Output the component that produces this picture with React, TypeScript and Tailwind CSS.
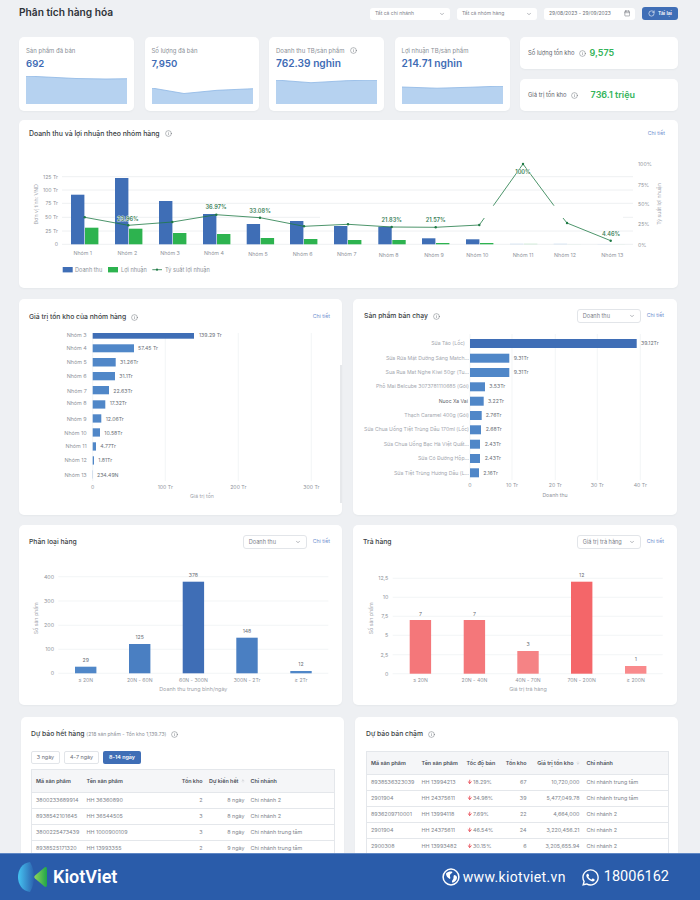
import { ArrowDown, ArrowUp, Calendar, ChevronDown, Info, RotateCw } from "lucide-react"
import { FaWhatsapp } from "react-icons/fa"
import type { ReactNode } from "react"

const gridColor = "#eef0f2"
const axisText = "#8f949c"
const valueText = "#6a6f77"

function T({ x, y, s = 5.2, fill = axisText, anchor = "start", weight = 400, rotate, halo, children }: {
  x: number
  y: number
  s?: number
  fill?: string
  anchor?: "start" | "middle" | "end"
  weight?: number
  rotate?: number
  halo?: boolean
  children: ReactNode
}) {
  return (
    <text
      x={x}
      y={y}
      fontSize={s}
      fill={fill}
      fontWeight={weight}
      textAnchor={anchor}
      dominantBaseline="central"
      stroke={halo ? "rgba(255,255,255,0.75)" : undefined}
      strokeWidth={halo ? 1.2 : undefined}
      paintOrder={halo ? "stroke" : undefined}
      transform={rotate ? `rotate(${rotate} ${x} ${y})` : undefined}
    >
      {children}
    </text>
  )
}

function Card({ className, children }: { className: string; children: ReactNode }) {
  return <div className={`bg-white rounded-[5px] shadow-[0_1px_2px_rgba(30,40,60,0.04)] ${className}`}>{children}</div>
}

function Icon() {
  return <Info size={7} strokeWidth={1.4} className="text-[#555b64] shrink-0" />
}

function Select({ label, className }: { label: string; className: string }) {
  return (
    <div className={`flex items-center justify-between bg-white rounded-[3px] text-[#7d828a] ${className}`}>
      <span>{label}</span>
      <ChevronDown size={6} className="text-[#6b7078]" />
    </div>
  )
}

function Detail() {
  return <span className="text-[5.2px] text-[#6f8fcf]">Chi tiết</span>
}

function Kpi({ label, value, info, big, pts, bottom }: {
  label: string
  value: string
  info?: boolean
  big?: boolean
  pts: string
  bottom: number
}) {
  return (
    <Card className="h-[74px] px-[7px] pt-[9px] relative">
      <div className="flex items-center gap-[6px] h-[8px] text-[6px] text-[#8a8f97]">
        <span>{label}</span>
        {info && <Icon />}
      </div>
      <div className={`font-semibold text-[#3f6cb5] mt-[3px] leading-[13px] ${big ? "text-[10.2px]" : "text-[9.6px]"}`}>{value}</div>
      <svg width="101" height={bottom} viewBox={`0 0 101 ${bottom}`} className="block absolute left-[7px] bottom-[7px]">
        <polygon points={`0,${bottom} ${pts} 101,${bottom}`} fill="#b6d2f0" />
        <polyline points={pts} fill="none" stroke="#8db6e5" strokeWidth="0.8" />
      </svg>
    </Card>
  )
}

const groups = [
  { x: 71, top: 194.7, gTop: 227.7, lx: 82.7, ly: 253.3 },
  { x: 115, top: 178, gTop: 228.7, lx: 127.3, ly: 252.7 },
  { x: 159, top: 201, gTop: 233, lx: 170, ly: 252.7 },
  { x: 203, top: 214, gTop: 234, lx: 214, ly: 253.3 },
  { x: 246.7, top: 224, gTop: 238, lx: 258, ly: 253.7 },
  { x: 290, top: 221, gTop: 239, lx: 302.7, ly: 253.7 },
  { x: 334, top: 226, gTop: 240, lx: 346.7, ly: 254.3 },
  { x: 378.3, top: 226.7, gTop: 240, lx: 388.7, ly: 254.7 },
  { x: 422, top: 238.3, gTop: 243, lx: 434, ly: 255.3 },
  { x: 466, top: 239.3, gTop: 243, lx: 477.3, ly: 254.7 },
  { x: 510, top: 243.7, gTop: 243.7, lx: 523, ly: 254.7, light: true },
  { x: 553.7, top: 243.7, gTop: 244.2, lx: 565, ly: 254.7, light: true },
  { x: 597.5, top: 244.1, gTop: 244.2, lx: 612.3, ly: 254.7, light: true },
]

const points = [
  [84.7, 217.3], [128.3, 225.3], [172.3, 222], [216.3, 214.7], [260, 217.7], [304, 226.3], [348, 224.3],
  [391.7, 227], [435.7, 227.3], [479.3, 225], [523, 164], [567, 223], [610.7, 240.7],
]

const rates = [
  { x: 128, y: 218.5, t: "23.96%" },
  { x: 216, y: 207, t: "36.97%" },
  { x: 260, y: 210.7, t: "33.08%" },
  { x: 391.7, y: 220, t: "21.83%" },
  { x: 435.7, y: 220, t: "21.57%" },
  { x: 523, y: 171.7, t: "100%" },
  { x: 611, y: 233.7, t: "4.46%" },
]

function RevenueChart() {
  const axisL = [["125 Tr", 176.7], ["100 Tr", 190], ["75 Tr", 203.3], ["50 Tr", 217.3], ["25 Tr", 231], ["0", 244.3]] as const
  const axisR = [["100%", 164], ["75%", 184.7], ["50%", 204], ["25%", 224.3], ["0%", 244.7]] as const
  const line = (from: number, to: number) => points.slice(from, to).map((p) => p.join(",")).join(" ")
  return (
    <svg width="658" height="140" viewBox="19 148 658 140" className="block">
      {[176.7, 190, 203.3, 231, 244.3].map((y) => (
        <line key={y} x1="62" x2="633" y1={y} y2={y} stroke={gridColor} strokeWidth="1" />
      ))}
      <line x1="62" x2="320" y1="217.3" y2="217.3" stroke={gridColor} strokeWidth="1" />
      <line x1="623" x2="633" y1="217.3" y2="217.3" stroke={gridColor} strokeWidth="1" />
      {axisL.map(([t, y]) => <T key={t} x={58} y={y} anchor="end">{t}</T>)}
      {axisR.map(([t, y]) => <T key={t} x={638} y={y}>{t}</T>)}
      <T x={36} y={204.3} anchor="middle" rotate={-90} fill="#a4a8af">Đơn vị tính: VND</T>
      <T x={658.7} y={204} anchor="middle" rotate={-90} fill="#a4a8af">Tỷ suất lợi nhuận</T>
      {groups.map((g) => (
        <g key={g.x}>
          <rect x={g.x} y={g.top} width="13.4" height={244.3 - g.top} fill={g.light ? "#c9dcf2" : "#3f6eb6"} />
          <rect x={g.x + 14} y={g.gTop} width="13.4" height={244.3 - g.gTop} fill={g.light ? "#bfe8cb" : "#2db34f"} />
        </g>
      ))}
      {groups.map((g, i) => <T key={i} x={g.lx} y={g.ly} s={5.3} anchor="middle">{`Nhóm ${i + 1}`}</T>)}
      <polyline points={line(0, 10)} fill="none" stroke="#1f7a45" strokeWidth="0.8" />
      <polyline points="479.3,225 484.3,218" fill="none" stroke="#1f7a45" strokeWidth="0.8" />
      <polyline points="493.3,205.7 523,164 554,205.7" fill="none" stroke="#1f7a45" strokeWidth="0.8" />
      <polyline points="563,218 567,223 610.7,240.7" fill="none" stroke="#1f7a45" strokeWidth="0.8" />
      {points.map((p) => <circle key={p[0]} cx={p[0]} cy={p[1]} r="1.2" fill="#1f7a45" />)}
      {rates.map((r) => <T key={r.t} x={r.x} y={r.y} s={5.6} weight={600} anchor="middle" fill="#3a8058" halo>{r.t}</T>)}
      <rect x="62.7" y="267" width="10" height="5.4" fill="#3f6eb6" />
      <T x={75} y={269.8} s={5.6}>Doanh thu</T>
      <rect x="108" y="267" width="10" height="5.4" fill="#2db34f" />
      <T x={121} y={269.8} s={5.6}>Lợi nhuận</T>
      <line x1="152.3" x2="162" y1="269.7" y2="269.7" stroke="#1f7a45" strokeWidth="0.8" />
      <circle cx="157" cy="269.7" r="1.1" fill="#1f7a45" />
      <T x={165} y={269.8} s={5.6}>Tỷ suất lợi nhuận</T>
    </svg>
  )
}

const stock = [
  { n: 3, y: 335, top: 327, h: 11.7, end: 194, v: "139.29 Tr", vx: 199 },
  { n: 4, y: 348, top: 344.3, h: 8, end: 134, v: "57.45 Tr", vx: 138 },
  { n: 5, y: 362, top: 358, h: 8.5, end: 115.7, v: "31.26Tr", vx: 120 },
  { n: 6, y: 376, top: 372, h: 8.3, end: 115, v: "31.1Tr", vx: 119.3 },
  { n: 7, y: 390.7, top: 386, h: 8.3, end: 109, v: "22.63Tr", vx: 113.3 },
  { n: 8, y: 403.3, top: 400.3, h: 8.3, end: 105.3, v: "17.32Tr", vx: 109.7 },
  { n: 9, y: 418.7, top: 414.3, h: 8.3, end: 101.3, v: "12.06Tr", vx: 105.7 },
  { n: 10, y: 432.7, top: 428.3, h: 8.3, end: 100, v: "10.58Tr", vx: 104.3 },
  { n: 11, y: 446, top: 442.3, h: 8.3, end: 96, v: "4.77Tr", vx: 100.3 },
  { n: 12, y: 459.7, top: 456.3, h: 8.3, end: 94, v: "1.81Tr", vx: 98.3 },
  { n: 13, y: 475, top: 470.3, h: 8.3, end: 92.9, v: "234.49N", vx: 97 },
]

function StockChart() {
  return (
    <svg width="323" height="182" viewBox="19 333 323 182" className="block">
      {[92.7, 165.3, 238.3, 311.3].map((x) => (
        <line key={x} x1={x} x2={x} y1="333" y2="481" stroke={gridColor} strokeWidth="0.7" />
      ))}
      {stock.map((r) => (
        <g key={r.n}>
          <T x={86.7} y={r.y} s={5.4} anchor="end">{`Nhóm ${r.n}`}</T>
          <rect x="92.7" y={r.top} width={r.end - 92.7} height={r.h} fill={r.n === 3 ? "#3f6eb6" : "#5087c8"} />
          <T x={r.vx} y={r.y} s={5.2} fill={valueText}>{r.v}</T>
        </g>
      ))}
      {[["0", 92.7], ["100 Tr", 165.3], ["200 Tr", 238.3], ["300 Tr", 311.3]].map(([t, x]) => (
        <T key={t} x={x as number} y={487.3} anchor="middle">{t}</T>
      ))}
      <T x={202} y={496.3} anchor="middle" fill="#a0a4ab">Giá trị tồn</T>
      <rect x="340" y="365" width="2" height="138" fill="#e6e8eb" />
    </svg>
  )
}

const best = [
  { l: "Sữa Táo (Lốc)", lx: 465, top: 339, end: 636.7, v: "39.12Tr", vx: 641, y: 343.3 },
  { l: "Sữa Rửa Mặt Dưỡng Sáng Match...", lx: 469, top: 353.7, end: 509.3, v: "9.31Tr", vx: 513.7, y: 358 },
  { l: "Sua Rua Mat  Nghe Kiwi 50gr (Tu...", lx: 469, top: 368, end: 509.3, v: "9.31Tr", vx: 513.7, y: 372 },
  { l: "Phô Mai Belcube 3073781110685 (Gói)", lx: 469, top: 382.3, end: 485, v: "3.53Tr", vx: 489.3, y: 386.3 },
  { l: "Nuoc Xa Vai", lx: 468, top: 396.7, end: 483.7, v: "3.22Tr", vx: 488, y: 401, dark: true },
  { l: "Thạch Caramel 400g (Gói)", lx: 469, top: 411, end: 481.7, v: "2.76Tr", vx: 485.7, y: 415 },
  { l: "Sữa Chua Uống Tiệt Trùng Dâu 170ml (Lốc)", lx: 469, top: 425.3, end: 481, v: "2.68Tr", vx: 485.7, y: 429.3 },
  { l: "Sữa Chua Uống Bạc Hà Việt Quất...", lx: 469, top: 439.7, end: 480, v: "2.43Tr", vx: 484.7, y: 444 },
  { l: "Sữa  Có Đường Hộp...", lx: 469, top: 454, end: 480, v: "2.43Tr", vx: 484.7, y: 458 },
  { l: "Sữa Tiệt Trùng Hương Dâu (L...", lx: 469, top: 468.3, end: 479, v: "2.16Tr", vx: 483.3, y: 473 },
]

function BestChart() {
  return (
    <svg width="324" height="182" viewBox="353 333 324 182" className="block">
      {[470, 512, 555.3, 597.3, 640.3].map((x) => (
        <line key={x} x1={x} x2={x} y1="334" y2="480" stroke={gridColor} strokeWidth="0.7" />
      ))}
      {best.map((r, i) => (
        <g key={r.y}>
          <T x={r.lx} y={r.y} s={5.15} anchor="end" fill={r.dark ? "#5f646c" : "#a4a8af"}>{r.l}</T>
          <rect x="470" y={r.top} width={r.end - 470} height="9" fill={i === 0 ? "#3f6eb6" : "#5087c8"} />
          <T x={r.vx} y={r.y} s={5.2} fill={valueText}>{r.v}</T>
        </g>
      ))}
      {[["0", 470], ["10 Tr", 512], ["20 Tr", 555.3], ["30 Tr", 597.3], ["40 Tr", 640.3]].map(([t, x]) => (
        <T key={t} x={x as number} y={485.3} anchor="middle">{t}</T>
      ))}
      <T x={555} y={495} anchor="middle">Doanh thu</T>
    </svg>
  )
}

type Column = { x: number; top: number; v: string; vy: number; l: string; c: string }

function ColumnChart({ vb, ticks, x1, x2, tx, titleX, cols, xTitle, xTitleX, yBase }: {
  vb: string
  ticks: [string, number][]
  x1: number
  x2: number
  tx: number
  titleX: number
  cols: Column[]
  xTitle: string
  xTitleX: number
  yBase: number
}) {
  return (
    <svg width="324" height="146" viewBox={vb} className="block">
      {ticks.map(([t, y]) => (
        <g key={t}>
          <line x1={x1} x2={x2} y1={y} y2={y} stroke={gridColor} strokeWidth="0.7" />
          <T x={tx} y={y} s={5.3} anchor="end">{t}</T>
        </g>
      ))}
      <T x={titleX} y={618.3} anchor="middle" rotate={-90} fill="#a4a8af">Số sản phẩm</T>
      {cols.map((c) => (
        <g key={c.x}>
          <rect x={c.x} y={c.top} width="21.4" height={yBase - c.top} fill={c.c} />
          <T x={c.x + 10.7} y={c.vy} s={5.2} anchor="middle" fill={valueText}>{c.v}</T>
          <T x={c.x + 10.7} y={680} s={5.1} anchor="middle">{c.l}</T>
        </g>
      ))}
      <T x={xTitleX} y={688.7} s={5.4} anchor="middle" fill="#a0a4ab">{xTitle}</T>
    </svg>
  )
}

const classCols: Column[] = [
  { x: 75, top: 666.7, v: "29", vy: 660, l: "≤ 20N", c: "#5087c8" },
  { x: 129, top: 644, v: "125", vy: 637, l: "20N - 60N", c: "#4a7fc2" },
  { x: 182.7, top: 581.7, v: "378", vy: 575.3, l: "60N - 300N", c: "#3f6eb6" },
  { x: 236.3, top: 637.7, v: "148", vy: 631, l: "300N - 2Tr", c: "#4a7fc2" },
  { x: 290.3, top: 671, v: "12", vy: 664, l: "≥ 2Tr", c: "#5087c8" },
]

const returnCols: Column[] = [
  { x: 409.7, top: 620, v: "7", vy: 613.7, l: "≤ 20N", c: "#f4777a" },
  { x: 463.7, top: 620, v: "7", vy: 613.7, l: "20N - 40N", c: "#f4777a" },
  { x: 517.3, top: 651, v: "3", vy: 644, l: "40N - 70N", c: "#f58385" },
  { x: 571, top: 581.7, v: "12", vy: 575.3, l: "70N - 200N", c: "#f46669" },
  { x: 625, top: 666, v: "1", vy: 659.3, l: "≥ 200N", c: "#f98a8c" },
]

const outRows = [
  ["3800233689914", "HH 36360890", "2", "8 ngày", "Chi nhánh 2"],
  ["8938542101645", "HH 36544505", "3", "8 ngày", "Chi nhánh 2"],
  ["3800225473439", "HH 1000900109", "3", "8 ngày", "Chi nhánh trung tâm"],
  ["8938525171320", "HH 13993355", "2", "9 ngày", "Chi nhánh trung tâm"],
  ["8938525171337", "HH 13993356", "2", "9 ngày", "Chi nhánh trung tâm"],
]

const slowRows = [
  ["8938536323039", "HH 13994213", "18.29%", "67", "10,720,000", "Chi nhánh trung tâm"],
  ["2901904", "HH 24375611", "34.98%", "39", "5,477,049.78", "Chi nhánh trung tâm"],
  ["8936209710001", "HH 13994118", "7.69%", "22", "4,664,000", "Chi nhánh 2"],
  ["2901904", "HH 24375611", "46.54%", "24", "3,220,456.21", "Chi nhánh 2"],
  ["2900308", "HH 13993482", "30.15%", "6", "3,205,655.94", "Chi nhánh 2"],
]

function OutTable() {
  return (
    <table className="table-fixed w-[304px] border-collapse text-[5.4px] text-[#80858d] border border-[#e4e7eb]">
      <colgroup>
        <col className="w-[55px]" />
        <col className="w-[64px]" />
        <col className="w-[52px]" />
        <col className="w-[42px]" />
        <col />
      </colgroup>
      <thead>
        <tr className="h-[23px] bg-[#f5f6f8] text-[#4b5058]">
          <th className="pl-[4px] text-left font-semibold">Mã sản phẩm</th>
          <th className="text-left font-semibold">Tên sản phẩm</th>
          <th className="text-right font-semibold">Tồn kho</th>
          <th className="text-right font-semibold">
            <span className="inline-flex items-center gap-[2px]">Dự kiến hết <ArrowUp size={4} className="text-[#b5b9bf]" /></span>
          </th>
          <th className="pl-[6px] text-left font-semibold">Chi nhánh</th>
        </tr>
      </thead>
      <tbody>
        {outRows.map((r) => (
          <tr key={r[0]} className="h-[16px] border-t border-[#e4e7eb]">
            <td className="pl-[4px]">{r[0]}</td>
            <td>{r[1]}</td>
            <td className="text-right">{r[2]}</td>
            <td className="text-right">{r[3]}</td>
            <td className="pl-[6px]">{r[4]}</td>
          </tr>
        ))}
      </tbody>
    </table>
  )
}

function SlowTable() {
  return (
    <table className="table-fixed w-[303px] border-collapse text-[5.4px] text-[#80858d] border border-[#e4e7eb]">
      <colgroup>
        <col className="w-[55px]" />
        <col className="w-[45px]" />
        <col className="w-[33px]" />
        <col className="w-[27px]" />
        <col className="w-[53px]" />
        <col />
      </colgroup>
      <thead>
        <tr className="h-[23px] bg-[#f5f6f8] text-[#4b5058]">
          <th className="pl-[4px] text-left font-semibold">Mã sản phẩm</th>
          <th className="text-left font-semibold">Tên sản phẩm</th>
          <th className="text-left font-semibold">Tốc độ bán</th>
          <th className="text-right font-semibold">Tồn kho</th>
          <th className="text-right font-semibold">
            <span className="inline-flex items-center gap-[2px]">Giá trị tồn kho <ArrowDown size={4} className="text-[#b5b9bf]" /></span>
          </th>
          <th className="pl-[7px] text-left font-semibold">Chi nhánh</th>
        </tr>
      </thead>
      <tbody>
        {slowRows.map((r) => (
          <tr key={r[2]} className="h-[16px] border-t border-[#e4e7eb]">
            <td className="pl-[4px]">{r[0]}</td>
            <td>{r[1]}</td>
            <td>
              <span className="inline-flex items-center gap-[1px]">
                <ArrowDown size={5.5} strokeWidth={3.5} className="text-[#e5333f]" />
                {r[2]}
              </span>
            </td>
            <td className="text-right">{r[3]}</td>
            <td className="text-right">{r[4]}</td>
            <td className="pl-[7px]">{r[5]}</td>
          </tr>
        ))}
      </tbody>
    </table>
  )
}

function Logo() {
  return (
    <svg width="30" height="30" viewBox="0 0 30 30">
      <defs>
        <linearGradient id="lens" x1="0" x2="1" y1="0" y2="0">
          <stop offset="0" stopColor="#45c4f2" />
          <stop offset="1" stopColor="#2c62ae" />
        </linearGradient>
        <linearGradient id="leaf" x1="0" x2="1" y1="0" y2="0">
          <stop offset="0" stopColor="#8fd65a" />
          <stop offset="1" stopColor="#1fa54a" />
        </linearGradient>
      </defs>
      <path d="M12 0 C4 1 0 8 0 15 C0 22 4 29 12 30 C15 25 16 20 16 15 C16 10 15 5 12 0 Z" fill="url(#lens)" />
      <path d="M17 13.5 L26.5 5.5 C28 4.5 29 5.2 29 7 L29 23 C29 24.8 28 25.5 26.5 24.5 L17 16.5 C16 15.5 16 14.5 17 13.5 Z" fill="url(#leaf)" />
    </svg>
  )
}

function Globe() {
  return (
    <svg width="18" height="18" viewBox="0 0 18 18" className="shrink-0">
      <circle cx="9" cy="9" r="7.9" fill="none" stroke="#fff" strokeWidth="1.5" />
      <path d="M4 5.5 C6 3.5 9 3 10.5 4 C10 5.5 8.5 5.5 8 7 C7.5 8.5 9 9.5 8 11 C6.5 10.5 4 8.5 4 5.5 Z" fill="#fff" />
      <path d="M12 7 C13.5 7 15 8 15 9.5 C15 12 13 14 10.5 14.8 C9.5 14 10 12.5 11 11.5 C12 10.5 11 8.5 12 7 Z" fill="#fff" />
    </svg>
  )
}

export default function App() {
  return (
    <div className="relative w-[700px] h-[900px] overflow-hidden bg-[#eef0f3] font-[Inter,sans-serif]">
      <div className="pl-[19px] w-[678px]">
        <header className="h-[37px] flex items-start justify-between">
          <h1 className="text-[10.2px] font-semibold text-[#2f3338] mt-[6px] leading-[13px]">Phân tích hàng hóa</h1>
          <div className="flex items-center gap-[7px] mt-[7px]">
            <Select label="Tất cả chi nhánh" className="w-[80px] h-[12px] px-[5px] text-[5px]" />
            <Select label="Tất cả nhóm hàng" className="w-[80px] h-[12px] px-[5px] text-[5px]" />
            <div className="flex items-center justify-between w-[91px] h-[12px] px-[5px] bg-white rounded-[3px] text-[5px] text-[#6d7279]">
              <span>29/08/2023 - 29/09/2023</span>
              <Calendar size={6.5} />
            </div>
            <button type="button" className="flex items-center justify-center gap-[3px] w-[36px] h-[13px] rounded-[3px] bg-[#3f6eb6] text-white text-[5px] font-semibold">
              <RotateCw size={7} />
              Tải lại
            </button>
          </div>
        </header>

        <section className="grid grid-cols-[115px_114px_115px_115px_158px] gap-x-[10.5px] h-[74px]">
          <Kpi label="Sản phẩm đã bán" value="692" pts="0,0 50,2.5 80,3 101,2.7" bottom={28} />
          <Kpi label="Số lượng đã bán" value="7,950" pts="0,0 32,5.5 65,2.3 101,0.7" bottom={16} />
          <Kpi label="Doanh thu TB/sản phẩm" value="762.39 nghìn" big info pts="0,0 35,2.7 70,0.7 101,0" bottom={24} />
          <Kpi label="Lợi nhuận TB/sản phẩm" value="214.71 nghìn" big pts="0,1 35,2.2 70,1.2 101,0" bottom={18} />
          <div className="flex flex-col justify-between">
            <Card className="h-[32px] flex items-center gap-[4px] px-[8px] text-[5.85px] text-[#5f646c]">
              <span>Số lượng tồn kho</span>
              <Icon />
              <span className="text-[9px] font-semibold text-[#34b45a]">9,575</span>
            </Card>
            <Card className="h-[32px] flex items-center gap-[4px] px-[8px] text-[5.85px] text-[#5f646c]">
              <span>Giá trị tồn kho</span>
              <Icon />
              <span className="ml-[9px] text-[9px] font-semibold text-[#34b45a]">736.1 triệu</span>
            </Card>
          </div>
        </section>

        <Card className="mt-[9px] h-[168px]">
          <div className="h-[28px] px-[10px] pr-[13px] flex items-center justify-between">
            <div className="flex items-center gap-[5px] text-[6.9px] font-medium text-[#3a3e44]">
              Doanh thu và lợi nhuận theo nhóm hàng
              <Icon />
            </div>
            <Detail />
          </div>
          <RevenueChart />
        </Card>

        <div className="mt-[11px] flex gap-[11px]">
          <Card className="w-[323px] h-[216px]">
            <div className="h-[34px] pt-[2px] pl-[10px] pr-[12px] flex items-center justify-between">
              <div className="flex items-center gap-[5px] text-[6.8px] font-medium text-[#3a3e44]">
                Giá trị tồn kho của nhóm hàng
                <Icon />
              </div>
              <Detail />
            </div>
            <StockChart />
          </Card>
          <Card className="w-[324px] h-[216px]">
            <div className="h-[34px] pl-[11px] pr-[13px] flex items-center justify-between">
              <div className="flex items-center gap-[5px] text-[6.8px] font-medium text-[#3a3e44]">
                Sản phẩm bán chạy
                <Icon />
              </div>
              <div className="flex items-center gap-[6px]">
                <Select label="Doanh thu" className="w-[64px] h-[14px] px-[5px] border border-[#e2e5e9] text-[5.6px]" />
                <Detail />
              </div>
            </div>
            <BestChart />
          </Card>
        </div>

        <div className="mt-[10px] flex gap-[11px]">
          <Card className="w-[323px] h-[180px]">
            <div className="h-[34px] pl-[10px] pr-[12px] flex items-center justify-between">
              <span className="text-[6.8px] font-medium text-[#3a3e44]">Phân loại hàng</span>
              <div className="flex items-center gap-[6px]">
                <Select label="Doanh thu" className="w-[64px] h-[14px] px-[5px] border border-[#e2e5e9] text-[5.6px]" />
                <Detail />
              </div>
            </div>
            <ColumnChart
              vb="19 559 324 146"
              ticks={[["400", 576.7], ["300", 601], ["200", 625.3], ["100", 649.3], ["0", 673.3]]}
              x1={58.3}
              x2={328.3}
              tx={54}
              titleX={36}
              cols={classCols}
              xTitle="Doanh thu trung bình/ngày"
              xTitleX={193.3}
              yBase={673.3}
            />
          </Card>
          <Card className="w-[324px] h-[180px]">
            <div className="h-[34px] pl-[10px] pr-[13px] flex items-center justify-between">
              <span className="text-[6.8px] font-medium text-[#3a3e44]">Trả hàng</span>
              <div className="flex items-center gap-[6px]">
                <Select label="Giá trị trả hàng" className="w-[64px] h-[14px] px-[5px] border border-[#e2e5e9] text-[5.6px]" />
                <Detail />
              </div>
            </div>
            <ColumnChart
              vb="353 559 324 146"
              ticks={[["12,5", 578.3], ["10", 597.3], ["7,5", 616.3], ["5", 635.3], ["2,5", 654.7], ["0", 673.7]]}
              x1={392.7}
              x2={662.7}
              tx={388.3}
              titleX={370.7}
              cols={returnCols}
              xTitle="Giá trị trả hàng"
              xTitleX={528}
              yBase={673.7}
            />
          </Card>
        </div>

        <div className="mt-[12px] ml-[2px] flex gap-[11px]">
          <Card className="w-[323px] h-[180px] px-[10px]">
            <div className="h-[34px] flex items-center gap-[5px]">
              <span className="text-[6.8px] font-medium text-[#3a3e44]">
                Dự báo hết hàng <span className="text-[5px] font-normal text-[#8a8f97]">(218 sản phẩm - Tồn kho 1,139.73)</span>
              </span>
              <Icon />
            </div>
            <div className="flex gap-[4px] h-[13px] mb-[5px] text-[5.4px]">
              <button type="button" className="w-[29px] rounded-[2px] border border-[#e2e5e9] text-[#6a6f77]">3 ngày</button>
              <button type="button" className="w-[35px] rounded-[2px] border border-[#e2e5e9] text-[#6a6f77]">4-7 ngày</button>
              <button type="button" className="w-[38px] rounded-[2px] bg-[#3f6eb6] text-white font-semibold">8-14 ngày</button>
            </div>
            <OutTable />
          </Card>
          <Card className="w-[324px] h-[180px] pl-[11px]">
            <div className="h-[34px] flex items-center gap-[5px] text-[6.8px] font-medium text-[#3a3e44]">
              Dự báo bán chậm
              <Icon />
            </div>
            <SlowTable />
          </Card>
        </div>
      </div>

      <footer className="absolute left-0 right-0 bottom-0 h-[47px] bg-[#2a5caa] border-t border-[#5f87c4] flex items-center pl-[18px] pr-[31px] text-white">
        <Logo />
        <span className="ml-[5px] text-[18px] font-semibold font-[Roboto,sans-serif] leading-none">KiotViet</span>
        <div className="ml-auto flex items-center">
          <Globe />
          <span className="ml-[3px] text-[14px] font-[Roboto,sans-serif] tracking-[0.35px]">www.kiotviet.vn</span>
          <FaWhatsapp size={19} className="ml-[15px]" />
          <span className="ml-[4px] text-[14.5px] font-[Roboto,sans-serif]">18006162</span>
        </div>
      </footer>
    </div>
  )
}
